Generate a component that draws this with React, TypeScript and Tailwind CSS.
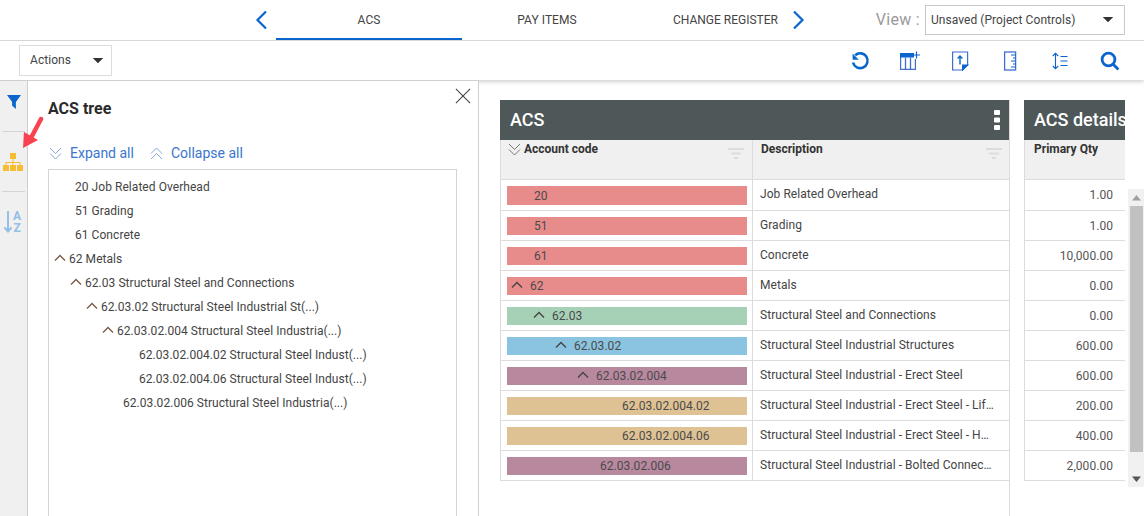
import React from "react";

const Chevrons = ({ up, color, className }: { up?: boolean; color: string; className?: string }) => (
  <svg width="13" height="13" viewBox="0 0 13 13" fill="none" stroke={color} strokeWidth="1" className={className}>
    {up ? (
      <>
        <path d="M1 6.5 6.5 1 12 6.5" />
        <path d="M1 12 6.5 6.5 12 12" />
      </>
    ) : (
      <>
        <path d="M1 1 6.5 6.5 12 1" />
        <path d="M1 6.5 6.5 12 12 6.5" />
      </>
    )}
  </svg>
);

const Caret = ({ color = "#444", w = 12, h = 12 }: { color?: string; w?: number; h?: number }) => (
  <svg width={w} height={h} viewBox="0 0 12 12" fill={color} className="shrink-0">
    <path d="M1.5 3.5h9L6 8z" />
  </svg>
);

const Up = ({ color = "#5a5a5a" }: { color?: string }) => (
  <svg width="12" height="8" viewBox="0 0 12 8" fill="none" stroke={color} strokeWidth="1.4" className="shrink-0">
    <path d="M1 6.5 6 1.5l5 5" />
  </svg>
);

const FilterLines = () => (
  <svg width="16" height="11" viewBox="0 0 16 11" fill="#dcdcdc" className="shrink-0">
    <rect x="0" y="0" width="16" height="2" />
    <rect x="3" y="4.5" width="10" height="2" />
    <rect x="6" y="9" width="4" height="2" />
  </svg>
);

const blue = "#0a66cc";

const ToolIcons = () => (
  <div className="flex items-center gap-[30px] pr-[24px]">
    <svg width="20" height="20" viewBox="0 0 20 20" fill="none" stroke={blue} strokeWidth="2.6">
      <path d="M5.2 4.2A7.4 7.4 0 1 1 3 11.5" />
      <path d="M2.6 2.6v6.2h6.2" fill={blue} stroke="none" />
    </svg>
    <svg width="20" height="20" viewBox="0 0 20 20" fill="none">
      <path d="M0.6 6V18.4H15.4V8" stroke="#3f6fd0" strokeWidth="1.2" />
      <rect x="0" y="2" width="14" height="4.5" fill={blue} />
      <path d="M5.5 6.5v12M10.5 6.5v12" stroke="#3f6fd0" strokeWidth="1.3" />
      <path d="M16.5 0.5v7M13 4h7" stroke={blue} strokeWidth="1.2" />
    </svg>
    <svg width="20" height="20" viewBox="0 0 20 20" fill="none" stroke="#3f6fd0" strokeWidth="1.2">
      <path d="M2.6 1h15v13l-5 5h-10z" />
      <path d="M17.6 14h-5v5z" fill={blue} stroke={blue} />
      <path d="M10 13.5V5M7.6 7.4 10 5l2.4 2.4" strokeWidth="1.4" stroke={blue} />
    </svg>
    <svg width="20" height="20" viewBox="0 0 20 20" fill="none" stroke="#3f6fd0" strokeWidth="1.3">
      <rect x="4.6" y="1" width="11" height="18" />
      <path d="M11 4h4.5M13 7h2.5M11 10h4.5M13 13h2.5M11 16h4.5" strokeWidth="1.1" stroke={blue} />
    </svg>
    <svg width="20" height="20" viewBox="0 0 20 20" fill="none" stroke={blue} strokeWidth="1.1">
      <path d="M5.5 2.5v15M2.8 5 5.5 2.3 8.2 5M2.8 15l2.7 2.7L8.2 15" />
      <path d="M10.5 5.5h7M10.5 10h7M10.5 14.5h7" />
    </svg>
    <svg width="20" height="20" viewBox="0 0 20 20" fill="none" stroke={blue} strokeWidth="2.8">
      <circle cx="8.5" cy="8.5" r="6.4" />
      <path d="M13 13l5.4 5.4" />
    </svg>
  </div>
);

const tree = [
  { t: "20 Job Related Overhead", c: "pl-[26px]" },
  { t: "51 Grading", c: "pl-[26px]" },
  { t: "61 Concrete", c: "pl-[26px]" },
  { t: "62 Metals", c: "pl-[5px]", up: true },
  { t: "62.03 Structural Steel and Connections", c: "pl-[21px]", up: true },
  { t: "62.03.02 Structural Steel Industrial St(...)", c: "pl-[37px]", up: true },
  { t: "62.03.02.004 Structural Steel Industria(...)", c: "pl-[53px]", up: true },
  { t: "62.03.02.004.02 Structural Steel Indust(...)", c: "pl-[90px]" },
  { t: "62.03.02.004.06 Structural Steel Indust(...)", c: "pl-[90px]" },
  { t: "62.03.02.006 Structural Steel Industria(...)", c: "pl-[74px]" },
];

const rows = [
  { code: "20", bar: "bg-[#e88b8b]", c: "pl-[27px]", d: "Job Related Overhead", q: "1.00" },
  { code: "51", bar: "bg-[#e88b8b]", c: "pl-[27px]", d: "Grading", q: "1.00" },
  { code: "61", bar: "bg-[#e88b8b]", c: "pl-[27px]", d: "Concrete", q: "10,000.00" },
  { code: "62", bar: "bg-[#e88b8b]", c: "pl-[4px]", up: true, d: "Metals", q: "0.00" },
  { code: "62.03", bar: "bg-[#a6d1b7]", c: "pl-[26px]", up: true, d: "Structural Steel and Connections", q: "0.00" },
  { code: "62.03.02", bar: "bg-[#8ac4e0]", c: "pl-[48px]", up: true, d: "Structural Steel Industrial Structures", q: "600.00" },
  { code: "62.03.02.004", bar: "bg-[#b8889f]", c: "pl-[70px]", up: true, d: "Structural Steel Industrial - Erect Steel", q: "600.00" },
  { code: "62.03.02.004.02", bar: "bg-[#dfc294]", c: "pl-[115px]", d: "Structural Steel Industrial - Erect Steel - Lift Rigging", q: "200.00" },
  { code: "62.03.02.004.06", bar: "bg-[#dfc294]", c: "pl-[115px]", d: "Structural Steel Industrial - Erect Steel - Heavy Lifts", q: "400.00" },
  { code: "62.03.02.006", bar: "bg-[#b8889f]", c: "pl-[93px]", d: "Structural Steel Industrial - Bolted Connections", q: "2,000.00" },
];

export default function App() {
  return (
    <div className="w-[1144px] h-[516px] overflow-hidden bg-white flex flex-col text-[12px] tracking-[0.05px] text-[#444] font-['Roboto',sans-serif]">
      {/* top tabs */}
      <div className="h-[41px] shrink-0 flex items-stretch border-b border-[#dcdcdc] pl-[255px] pr-[19px]">
        <div className="w-[13px] mr-[8px] flex items-center">
          <svg width="13" height="20" viewBox="0 0 13 20" fill="none" stroke={blue} strokeWidth="2.2">
            <path d="M11 1.5 2.5 10l8.5 8.5" />
          </svg>
        </div>
        <div className="w-[186px] border-b-[2px] border-[#0a66cc] flex items-center justify-center pt-[1px]">ACS</div>
        <div className="w-[170px] flex items-center justify-center">PAY ITEMS</div>
        <div className="pl-[41px] flex items-center tracking-normal">CHANGE REGISTER</div>
        <div className="ml-[14px] w-[13px] flex items-center">
          <svg width="13" height="20" viewBox="0 0 13 20" fill="none" stroke={blue} strokeWidth="2.2">
            <path d="M2 1.5 10.5 10 2 18.5" />
          </svg>
        </div>
        <div className="ml-auto flex items-center">
          <span className="text-[16px] text-[#9a9a9a] mr-[5px] tracking-[0.3px]">View :</span>
          <div className="w-[200px] h-[30px] border border-[#c8c8c8] flex items-center justify-between pl-[5px] pr-[9px]">
            <span>Unsaved (Project Controls)</span>
            <Caret color="#333" w={14} h={14} />
          </div>
        </div>
      </div>

      {/* toolbar */}
      <div className="h-[39px] shrink-0 flex items-center justify-between pl-[19px] relative z-10 bg-white shadow-[0_2px_4px_rgba(0,0,0,0.18)]">
        <div className="w-[93px] h-[31px] border border-[#dcdcdc] flex items-center justify-between pl-[10px] pr-[6px]">
          <span className="pb-[2px]">Actions</span>
          <Caret color="#333" w={14} h={14} />
        </div>
        <ToolIcons />
      </div>

      {/* body */}
      <div className="flex-1 min-h-0 flex">
        {/* side rail */}
        <div className="relative z-30 w-[28px] shrink-0 bg-[#f0f0f0] border-r border-t border-[#cfcfcf] flex flex-col items-stretch">
          <div className="h-[51px] pt-[14px] mx-[2px] border-b border-[#d4d4d4] flex justify-center items-start">
            <svg width="14" height="14" viewBox="0 0 15 15" fill={blue}>
              <path d="M0 0h15L9.5 7.5V15L5.5 11.5v-4z" />
            </svg>
          </div>
          <div className="h-[60px] mx-[2px] border-b border-[#d4d4d4] flex items-center pl-[1px]">
            <svg width="20" height="18" viewBox="0 0 20 18" fill="#f6bd32">
              <rect x="7" y="0" width="6" height="6" />
              <rect x="0" y="12" width="6" height="6" />
              <rect x="7" y="12" width="6" height="6" />
              <rect x="14" y="12" width="6" height="6" />
              <path d="M9.5 6h1v3H17.5v3h-1V10h-6v2h-1v-2h-6v2h-1V9h7z" />
            </svg>
          </div>
          <div className="pt-[18px] pl-[3px]">
            <svg width="21" height="23" viewBox="0 0 21 23" fill="none">
              <path d="M5 1v20M1.5 17.5 5 21.5l3.5-4" stroke="#94bfe6" strokeWidth="2" />
              <text x="10" y="9.5" fontSize="12" fontWeight="700" fill="#94bfe6" fontFamily="Roboto, sans-serif">A</text>
              <text x="10.5" y="22" fontSize="12" fontWeight="700" fill="#94bfe6" fontFamily="Roboto, sans-serif">Z</text>
            </svg>
          </div>
          <svg width="24" height="34" viewBox="0 0 24 34" className="absolute left-[20px] top-[35px]">
            <path d="M21 3 12 20" stroke="#f9424f" strokeWidth="4.5" strokeLinecap="round" />
            <path d="M3 32 4 16 18 24z" fill="#f9424f" />
          </svg>
        </div>

        {/* tree panel */}
        <div className="relative z-20 w-[451px] shrink-0 bg-white border-t border-r border-[#cfcfcf] pl-[20px] pr-[20px] flex flex-col">
          <div className="h-[56px] flex items-center justify-between">
            <span className="text-[16px] font-bold text-[#2b2b2b] -mt-[1px] tracking-normal">ACS tree</span>
            <svg width="16" height="16" viewBox="0 0 18 18" fill="none" stroke="#444" strokeWidth="1.2" className="-mr-[13px] -mt-[26px]">
              <path d="M1 1l16 16M17 1 1 17" />
            </svg>
          </div>
          <div className="h-[32px] flex items-center text-[14px] text-[#3a75cf] tracking-normal">
            <Chevrons color="#8aa4dc" className="ml-[1px]" />
            <span className="ml-[8px]">Expand all</span>
            <Chevrons up color="#8aa4dc" className="ml-[16px]" />
            <span className="ml-[8px]">Collapse all</span>
          </div>
          <div className="flex-1 border border-b-0 border-[#d4d4d4] w-[409px] pt-[5px]">
            {tree.map((r) => (
              <div key={r.t} className={`h-[24px] flex items-center whitespace-nowrap ${r.c}`}>
                {r.up && (
                  <span className="mr-[3px] -mt-[3px]">
                    <Up color="#7a5a48" />
                  </span>
                )}
                {r.t}
              </div>
            ))}
          </div>
        </div>

        {/* main */}
        <div className="flex-1 min-w-0 flex items-stretch pl-[21px] pt-[20px]">
          <div className="w-[510px] shrink-0 flex flex-col border-r border-[#dcdcdc]">
            <div className="h-[40px] bg-[#4e5859] flex items-center justify-between pl-[10px] pr-[9px] text-white text-[18px] font-medium shrink-0 tracking-normal">
              <span className="-mt-[2px]">ACS</span>
              <svg width="6" height="20" viewBox="0 0 6 20" fill="#fff">
                <rect x="0" y="0" width="6" height="5" rx="1" />
                <rect x="0" y="7.5" width="6" height="5" rx="1" />
                <rect x="0" y="15" width="6" height="5" rx="1" />
              </svg>
            </div>
            <div className="h-[40px] shrink-0 flex bg-[#f0f0f0] border-b border-l border-[#dcdcdc] font-bold text-[#333] tracking-normal">
              <div className="w-[252px] shrink-0 border-r border-[#dcdcdc] flex items-start justify-between pl-[7px] pr-[8px]">
                <span className="flex items-center">
                  <Chevrons color="#777" className="mr-[3px]" />
                  Account code
                </span>
                <span className="mt-[8px]"><FilterLines /></span>
              </div>
              <div className="flex-1 flex items-start justify-between pl-[8px] pr-[7px]">
                <span>Description</span>
                <span className="mt-[8px]"><FilterLines /></span>
              </div>
            </div>
            {rows.map((r, i) => (
              <div key={r.code} className={`${i === 0 ? "h-[31px]" : "h-[30px]"} shrink-0 flex border-b border-l border-[#dcdcdc]`}>
                <div className="w-[252px] shrink-0 border-r border-[#dcdcdc] flex items-center pl-[6px] pr-[5px]">
                  <div className={`w-[240px] ${i === 0 ? "h-[19px]" : "h-[18px]"} ${r.bar} ${r.c} flex items-center whitespace-nowrap text-[#4a4a4a] pt-[1px]`}>
                    {r.up && (
                      <span className="mr-[7px] -mt-[3px]">
                        <Up color="#444" />
                      </span>
                    )}
                    {r.code}
                  </div>
                </div>
                <div className="flex-1 min-w-0 pl-[7px] pr-[14px] flex items-center pb-[2px]">
                  <span className="truncate w-[234px]">{r.d}</span>
                </div>
              </div>
            ))}
          </div>
          <div className="w-[101px] ml-[14px] shrink-0 flex flex-col">
            <div className="h-[40px] bg-[#4e5859] flex items-center pl-[10px] pb-[2px] text-white text-[18px] font-medium shrink-0 overflow-hidden whitespace-nowrap tracking-normal">
              ACS details
            </div>
            <div className="h-[40px] shrink-0 bg-[#f0f0f0] border-b border-l border-[#dcdcdc] font-bold text-[#333] pl-[9px] tracking-normal">
              Primary Qty
            </div>
            {rows.map((r, i) => (
              <div key={r.code} className={`${i === 0 ? "h-[31px]" : "h-[30px]"} shrink-0 border-b border-l border-[#dcdcdc] flex items-center justify-end pr-[12px] text-[#555]`}>
                {r.q}
              </div>
            ))}
          </div>
          <div className="w-[16px] ml-[3px] mt-[89px] h-[298px] shrink-0 bg-[#f1f1f1] flex flex-col items-end">
            <div className="h-[17px] w-full flex items-center justify-center">
              <svg width="9" height="6" viewBox="0 0 9 6" fill="#a0a0a0"><path d="M0 5.5h9L4.5 0z" /></svg>
            </div>
            <div className="w-[13px] mr-[1px] h-[246px] bg-[#c1c1c1]" />
            <div className="flex-1 w-full flex flex-col justify-end">
              <div className="h-[17px] flex items-center justify-center">
                <svg width="9" height="6" viewBox="0 0 9 6" fill="#555"><path d="M0 .5h9L4.5 6z" /></svg>
              </div>
            </div>
          </div>
        </div>
      </div>
    </div>
  );
}
